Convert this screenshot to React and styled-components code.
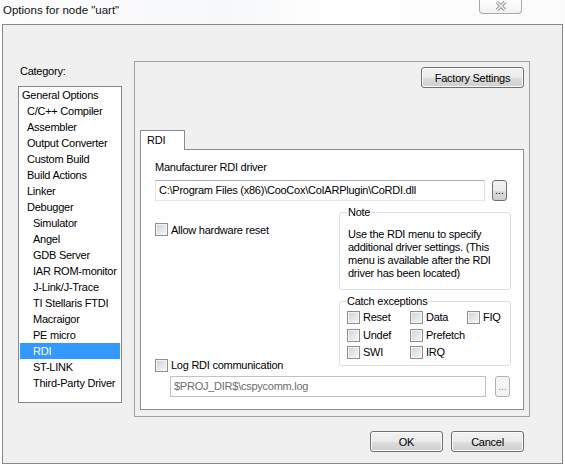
import styled, { createGlobalStyle } from "styled-components";

const GlobalStyle = createGlobalStyle`
  html, body {
    margin: 0;
    padding: 0;
    background: #fff;
  }
  body {
    width: 565px;
    height: 467px;
    overflow: hidden;
    font-family: "Liberation Sans", Arial, sans-serif;
    font-size: 11px;
    letter-spacing: -0.25px;
    color: #000;
  }
`;

const categories = [
  { name: "General Options", level: 0 },
  { name: "C/C++ Compiler", level: 1 },
  { name: "Assembler", level: 1 },
  { name: "Output Converter", level: 1 },
  { name: "Custom Build", level: 1 },
  { name: "Build Actions", level: 1 },
  { name: "Linker", level: 1 },
  { name: "Debugger", level: 1 },
  { name: "Simulator", level: 2 },
  { name: "Angel", level: 2 },
  { name: "GDB Server", level: 2 },
  { name: "IAR ROM-monitor", level: 2 },
  { name: "J-Link/J-Trace", level: 2 },
  { name: "TI Stellaris FTDI", level: 2 },
  { name: "Macraigor", level: 2 },
  { name: "PE micro", level: 2 },
  { name: "RDI", level: 2, selected: true },
  { name: "ST-LINK", level: 2 },
  { name: "Third-Party Driver", level: 2 },
];

const exceptions = ["Reset", "Data", "FIQ", "Undef", "Prefetch", null, "SWI", "IRQ", null];

const Check = ({ label }) => (
  <CheckRow>
    <Box />
    <span>{label}</span>
  </CheckRow>
);

const App = () => {
  return (
    <Window>
      <GlobalStyle />
      <TitleBar>
        <Title>Options for node "uart"</Title>
        <CloseButton>
          <svg width="14" height="10" viewBox="0 0 14 10">
            <path d="M3 1 L11 9 M11 1 L3 9" stroke="#8d8d8d" strokeWidth="3.2" fill="none" />
            <path d="M3 1 L11 9 M11 1 L3 9" stroke="#fafafa" strokeWidth="1.4" fill="none" />
          </svg>
        </CloseButton>
      </TitleBar>

      <Frame>
        <Content>
          <Sidebar>
            <CategoryLabel>Category:</CategoryLabel>
            <CategoryList>
              {categories.map((c) => (
                <CategoryItem key={c.name} $level={c.level} $selected={c.selected}>
                  {c.name}
                </CategoryItem>
              ))}
            </CategoryList>
          </Sidebar>

          <Panel>
            <PanelHeader>
              <Button $width={103}>Factory Settings</Button>
            </PanelHeader>
            <TabStrip>
              <Tab>RDI</Tab>
            </TabStrip>
            <TabPane>
              <FieldLabel>Manufacturer RDI driver</FieldLabel>
              <PathRow>
                <PathInput $width={330}>
                  C:\Program Files (x86)\CooCox\CoIARPlugin\CoRDI.dll
                </PathInput>
                <BrowseButton $gap={7}>...</BrowseButton>
              </PathRow>

              <Middle>
                <LeftColumn>
                  <Check label="Allow hardware reset" />
                  <Check label="Log RDI communication" />
                </LeftColumn>
                <RightColumn>
                  <GroupBox $pad="9px 8px 9px 8px">
                    <Legend>Note</Legend>
                    Use the RDI menu to specify
                    <br />
                    additional driver settings. (This
                    <br />
                    menu is available after the RDI
                    <br />
                    driver has been located)
                  </GroupBox>
                  <ExceptionBox $pad="1px 4px 3px 7px">
                    <Legend>Catch exceptions</Legend>
                    <ExceptionGrid>
                      {exceptions.map((e, i) =>
                        e ? <Check key={e} label={e} /> : <span key={i} />
                      )}
                    </ExceptionGrid>
                  </ExceptionBox>
                </RightColumn>
              </Middle>

              <PathRow $indent={15} $top={3}>
                <PathInput $width={316} $disabled>
                  $PROJ_DIR$\cspycomm.log
                </PathInput>
                <BrowseButton $gap={9} $disabled>
                  ...
                </BrowseButton>
              </PathRow>
            </TabPane>
          </Panel>
        </Content>

        <ButtonRow>
          <Button $width={73}>OK</Button>
          <Button $width={73}>Cancel</Button>
        </ButtonRow>
      </Frame>
    </Window>
  );
};

export default App;

const Window = styled.div`
  width: 565px;
  height: 467px;
  background: #fff;
`;

const TitleBar = styled.div`
  height: 24px;
  display: flex;
  justify-content: space-between;
  align-items: flex-start;
  padding-left: 3px;
  background: linear-gradient(90deg, #fdfdfd, #f7f8fa 40%, #ffffff 60%, #fbfbfb);
`;

const Title = styled.div`
  font-size: 11.5px;
  letter-spacing: 0;
  line-height: 21px;
  color: #111;
`;

const CloseButton = styled.div`
  width: 43px;
  height: 14px;
  margin-right: 43px;
  box-sizing: border-box;
  border: 1px solid #a9a9a9;
  border-top: none;
  border-radius: 0 0 4px 4px;
  background: linear-gradient(#ffffff, #f1f1f1);
  display: flex;
  align-items: center;
  justify-content: center;
  padding-bottom: 2px;
`;

const Frame = styled.div`
  margin-left: 2px;
  width: 561px;
  height: 440px;
  box-sizing: border-box;
  border: 1px solid #888;
  background: #f0f0f0;
  padding: 36px 0 0 15px;
  display: flex;
  flex-direction: column;
`;

const Content = styled.div`
  display: flex;
  align-items: flex-start;
  gap: 12px;
`;

const Sidebar = styled.div`
  width: 104px;
  display: flex;
  flex-direction: column;
  padding-top: 4px;
`;

const CategoryLabel = styled.div`
  line-height: 13px;
  margin-bottom: 8px;
  padding-left: 2px;
`;

const CategoryList = styled.div`
  height: 317px;
  box-sizing: border-box;
  border: 1px solid #828790;
  background: #fff;
  padding: 0 1px;
`;

const CategoryItem = styled.div`
  height: 16px;
  line-height: 16px;
  padding-left: ${(p) => [2, 7, 13][p.$level]}px;
  white-space: nowrap;
  background: ${(p) => (p.$selected ? "#3399ff" : "transparent")};
  color: ${(p) => (p.$selected ? "#fff" : "#000")};
`;

const Panel = styled.div`
  width: 396px;
  height: 356px;
  box-sizing: border-box;
  border: 1px solid #a0a0a0;
  padding: 5px 5px 0 5px;
  display: flex;
  flex-direction: column;
`;

const PanelHeader = styled.div`
  display: flex;
  justify-content: flex-end;
`;

const Button = styled.button`
  width: ${(p) => p.$width}px;
  height: 21px;
  box-sizing: border-box;
  padding: 0;
  border: 1px solid #707070;
  border-radius: 3px;
  background: linear-gradient(#f2f2f2 0%, #ebebeb 50%, #dddddd 51%, #cfcfcf 100%);
  box-shadow: inset 0 0 0 1px #fcfcfc;
  font: inherit;
  letter-spacing: inherit;
  color: #000;
`;

const TabStrip = styled.div`
  display: flex;
  margin-top: 42px;
`;

const Tab = styled.div`
  position: relative;
  z-index: 1;
  width: 45px;
  height: 20px;
  box-sizing: border-box;
  margin-bottom: -1px;
  border: 1px solid #898c95;
  border-bottom: none;
  background: #fff;
  padding-left: 6px;
  line-height: 19px;
`;

const TabPane = styled.div`
  width: 384px;
  height: 261px;
  box-sizing: border-box;
  border: 1px solid #898c95;
  background: #fff;
  padding: 11px 0 0 14px;
`;

const FieldLabel = styled.div`
  line-height: 13px;
  margin-bottom: 6px;
`;

const PathRow = styled.div`
  display: flex;
  align-items: flex-start;
  padding-left: ${(p) => p.$indent || 0}px;
  margin-top: ${(p) => p.$top || 0}px;
`;

const PathInput = styled.div`
  width: ${(p) => p.$width}px;
  height: 21px;
  box-sizing: border-box;
  border: 1px solid ${(p) => (p.$disabled ? "#bfc3c8" : "#abadb3")};
  border-color: ${(p) =>
    p.$disabled ? "#bfc3c8" : "#abadb3 #dbdfe6 #e3e9ef #e2e3ea"};
  background: #fff;
  padding-left: 3px;
  line-height: 19px;
  white-space: nowrap;
  color: ${(p) => (p.$disabled ? "#6d6d6d" : "#000")};
`;

const BrowseButton = styled.div`
  width: 15px;
  height: 21px;
  box-sizing: border-box;
  margin-left: ${(p) => p.$gap}px;
  border: 1px solid ${(p) => (p.$disabled ? "#adb2b5" : "#707070")};
  border-radius: 3px;
  background: ${(p) =>
    p.$disabled
      ? "#f4f4f4"
      : "linear-gradient(#f2f2f2 0%, #ebebeb 50%, #dddddd 51%, #cfcfcf 100%)"};
  color: ${(p) => (p.$disabled ? "#838383" : "#000")};
  font-size: 10px;
  letter-spacing: 0;
  line-height: 19px;
  text-align: center;
`;

const Middle = styled.div`
  display: grid;
  grid-template-columns: 184px 172px;
  margin-top: 5px;
`;

const LeftColumn = styled.div`
  display: flex;
  flex-direction: column;
  justify-content: space-between;
  padding-top: 16px;
`;

const RightColumn = styled.div`
  display: flex;
  flex-direction: column;
  gap: 5px;
  padding-bottom: 7px;
`;

const CheckRow = styled.label`
  display: flex;
  align-items: center;
  gap: 3px;
  height: 15px;
  white-space: nowrap;
`;

const Box = styled.span`
  width: 13px;
  height: 13px;
  flex: none;
  box-sizing: border-box;
  border: 1px solid #8e8f8f;
  background: linear-gradient(135deg, #cfd3d8, #f7f7f7);
  box-shadow: inset 0 0 0 1px #f4f4f4;
`;

const GroupBox = styled.fieldset`
  margin: 0;
  min-width: 0;
  border: 1px solid #d5dfe5;
  border-radius: 3px;
  padding: ${(p) => p.$pad};
  line-height: 13px;
`;

const ExceptionBox = styled(GroupBox)``;

const Legend = styled.legend`
  padding: 0 1px;
  margin-left: -1px;
  line-height: 13px;
`;

const ExceptionGrid = styled.div`
  display: grid;
  grid-template-columns: 63px 57px auto;
  grid-auto-rows: 17.5px;
  align-items: center;
`;

const ButtonRow = styled.div`
  display: flex;
  justify-content: flex-end;
  gap: 8px;
  margin-top: 14px;
  padding-right: 38px;
`;
